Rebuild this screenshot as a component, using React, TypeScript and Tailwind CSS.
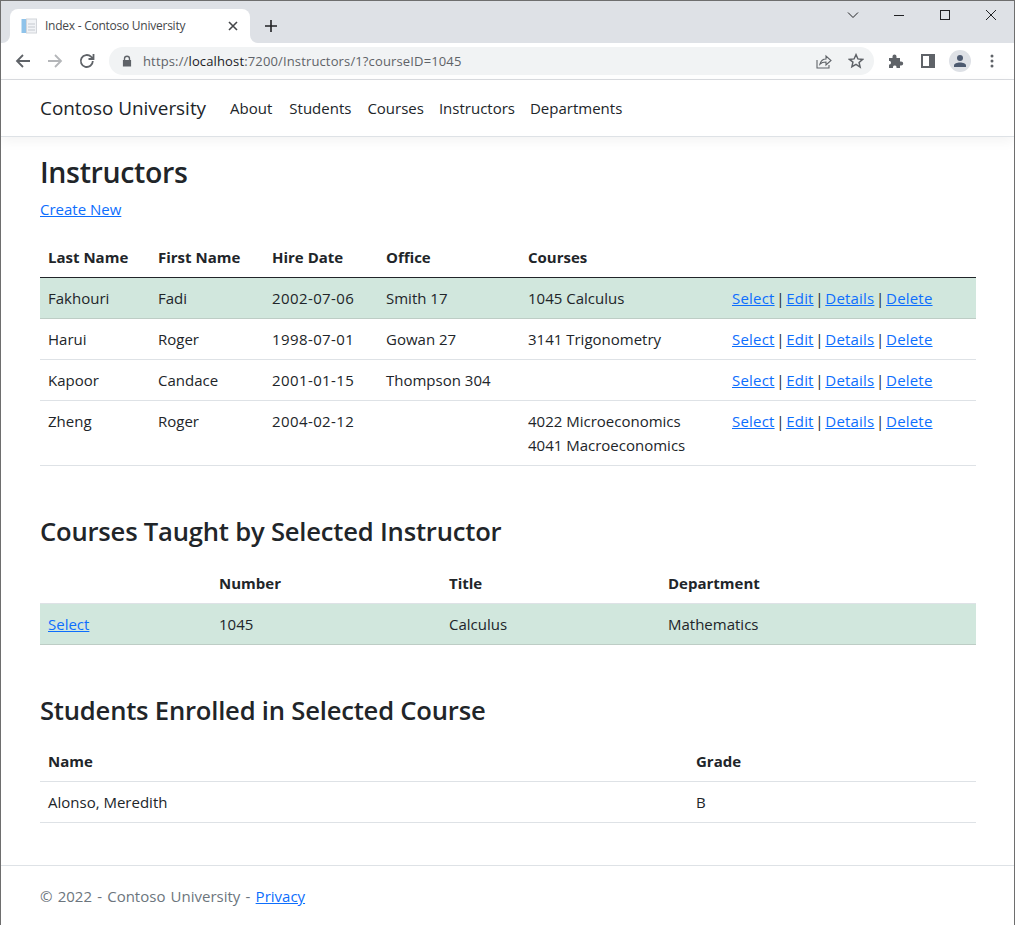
import React from "react";

const link = "text-[#0d6efd] underline";
const actionLink = "text-[#0d6efd] underline tracking-[0.2px]";
const td = "px-2 py-2 align-top border-b border-[#dee2e6]";
const tdSel = "px-2 py-2 align-top border-b border-[#bdcdc5] bg-[#d1e7dd]";
const th = "px-2 py-2 text-left font-bold align-bottom";

function Sep() {
  return <span className="mx-[1.7px]">|</span>;
}

function Actions() {
  return (
    <div className="flex whitespace-nowrap">
      <a className={actionLink}>Select</a><Sep /><a className={actionLink}>Edit</a><Sep /><a className={actionLink}>Details</a><Sep /><a className={actionLink}>Delete</a>
    </div>
  );
}

const instructors = [
  { l: "Fakhouri", f: "Fadi", h: "2002-07-06", o: "Smith 17", c: ["1045 Calculus"] },
  { l: "Harui", f: "Roger", h: "1998-07-01", o: "Gowan 27", c: ["3141 Trigonometry"] },
  { l: "Kapoor", f: "Candace", h: "2001-01-15", o: "Thompson 304", c: [] },
  { l: "Zheng", f: "Roger", h: "2004-02-12", o: "", c: ["4022 Microeconomics", "4041 Macroeconomics"] },
];

function Chrome() {
  return (
    <div>
      <div className="h-[43px] bg-[#dee1e6] border-t border-[#6e6e6e] flex items-end pl-[9px] relative">
        <div className="w-[240px] h-[34px] bg-white rounded-t-lg flex items-center pl-[11px] pr-[12px] relative">
          <svg width="8" height="8" viewBox="0 0 8 8" className="absolute -left-[8px] bottom-0"><path d="M8 0v8H0a8 8 0 0 0 8-8z" fill="#ffffff" /></svg>
          <svg width="8" height="8" viewBox="0 0 8 8" className="absolute -right-[8px] bottom-0"><path d="M0 0v8h8a8 8 0 0 1-8-8z" fill="#ffffff" /></svg>
          <svg width="16" height="16" viewBox="0 0 16 16" className="shrink-0">
            <rect x="0.5" y="1" width="5" height="14" fill="#8fc3ea" />
            <rect x="5.500" y="1" width="10" height="14" fill="#f1f3f6" stroke="#d2d5da" />
            <path d="M7 6h7M7 9h7M7 12h7" stroke="#c5c9cf" strokeWidth="1" />
          </svg>
          <span className="ml-[8px] text-[12px] text-[#45474a] flex-1 whitespace-nowrap tracking-[-0.25px]">Index - Contoso University</span>
          <svg width="10" height="10" viewBox="0 0 10 10"><path d="M1 1l8 8M9 1l-8 8" stroke="#45474a" strokeWidth="1.6" /></svg>
        </div>
        <svg width="14" height="14" viewBox="0 0 14 14" className="ml-[14px] mb-[10px]"><path d="M7 1v12M1 7h12" stroke="#202124" strokeWidth="1.6" /></svg>
        <div className="absolute right-[17px] top-[8px] flex items-center gap-[34px]">
          <svg width="12" height="12" viewBox="0 0 12 12"><path d="M1 3.500l5 5 5-5" fill="none" stroke="#202124" /></svg>
          <svg width="12" height="12" viewBox="0 0 12 12"><path d="M1 6.500h10" stroke="#202124" /></svg>
          <svg width="12" height="12" viewBox="0 0 12 12"><rect x="1.500" y="1.500" width="9" height="9" fill="none" stroke="#202124" /></svg>
          <svg width="12" height="12" viewBox="0 0 12 12"><path d="M1 1l10 10M11 1L1 11" stroke="#202124" /></svg>
        </div>
      </div>
      <div className="h-[37px] bg-white border-b border-[#dadce0] flex items-center pl-[14px]">
        <svg width="16" height="16" viewBox="0 0 16 16"><path d="M15 8H2M8 2L2 8l6 6" fill="none" stroke="#5f6368" strokeWidth="1.800" /></svg>
        <svg width="16" height="16" viewBox="0 0 16 16" className="ml-[16px]"><path d="M1 8h13M8 2l6 6-6 6" fill="none" stroke="#b4b6b9" strokeWidth="1.800" /></svg>
        <svg width="16" height="16" viewBox="0 0 16 16" className="ml-[16px]"><path d="M13.800 8a6 6 0 1 1-1.800-4.300L14.500 6M14.500 1v5h-5" fill="none" stroke="#5f6368" strokeWidth="1.800" /></svg>
        <div className="ml-[14px] w-[765px] h-[28px] rounded-full bg-[#f1f3f4] flex items-center pl-[13px]">
          <svg width="10" height="12" viewBox="0 0 11 12"><path d="M2 5V3.500a3.500 3.500 0 0 1 7 0V5h1v7H1V5zm1.500 0h4V3.500a2 2 0 0 0-4 0z" fill="#5f6368" /></svg>
          <span className="ml-[11px] text-[13px] text-[#5f6368] whitespace-nowrap tracking-[0.14px]">https://<span className="text-[#202124]">localhost</span>:7200/Instructors/1?courseID=1045</span>
          <span className="flex-1" />
          <svg width="16" height="16" viewBox="0 0 16 16" className="mr-[16px]"><path d="M1 7v8h12v-3M4 11c1-3.500 3.500-5 6-5V3l5 4.500-5 4.500V9c-2.500 0-4.500.5-6 2z" fill="none" stroke="#5f6368" strokeWidth="1.100" /></svg>
          <svg width="16" height="16" viewBox="0 0 24 24" className="mr-[10px]"><path d="M12 2.500l2.900 6.400 7 .7-5.300 4.600 1.600 6.900L12 17l-6.200 3.600 1.600-6.900L2.100 9.600l7-.7z" fill="none" stroke="#5f6368" strokeWidth="2.200" /></svg>
        </div>
        <svg width="16" height="16" viewBox="0 0 16 16" className="ml-[14px]"><path d="M1 5h3.500V3.500a2 2 0 0 1 4 0V5H12v3.500h1.200a2 2 0 0 1 0 4H12V15H8.500v-1.200a1.800 1.800 0 0 0-3.500 0V15H1v-3.500h1a2 2 0 0 0 0-3.500H1z" fill="#5f6368" /></svg>
        <svg width="14" height="14" viewBox="0 0 14 14" className="ml-[17px]"><path d="M0 0h14v14H0zM2 2v10h6V2z" fill="#5f6368" fillRule="evenodd" /></svg>
        <div className="ml-[14px] w-[22px] h-[22px] rounded-full bg-[#dee1e6] flex items-center justify-center">
          <svg width="14" height="14" viewBox="0 0 14 14"><circle cx="7" cy="4" r="3" fill="#4d5a70" /><path d="M1 13v-1.500C1 9.500 4 8.500 7 8.500s6 1 6 3V13z" fill="#4d5a70" /></svg>
        </div>
        <svg width="4" height="14" viewBox="0 0 4 14" className="ml-[19px]"><circle cx="2" cy="2" r="1.500" fill="#5f6368" /><circle cx="2" cy="7" r="1.500" fill="#5f6368" /><circle cx="2" cy="12" r="1.500" fill="#5f6368" /></svg>
      </div>
    </div>
  );
}

export default function App() {
  return (
    <div className="w-[1015px] h-[925px] overflow-hidden bg-white text-[#212529] text-[15px] leading-[24px] font-['Open_Sans','Liberation_Sans',sans-serif] border-x border-[#6e6e6e] box-border">
      <Chrome />
      <nav className="h-[57px] border-b border-[#dee2e6] shadow-[0_4px_12px_rgba(0,0,0,0.05)] flex items-center pl-[39px]">
        <a className="text-[18.9px] text-[#212529] mr-[24px]">Contoso University</a>
        <a className="mr-[17px]">About</a>
        <a className="mr-[16px]">Students</a>
        <a className="mr-[15px]">Courses</a>
        <a className="mr-[15px]">Instructors</a>
        <a>Departments</a>
      </nav>
      <main className="pl-[39px] w-[975px]">
        <h1 className="text-[28.5px] leading-[34px] font-semibold tracking-[-0.35px] mt-[18px] mb-[8px]">Instructors</h1>
        <p className="mb-[16px]"><a className={link}>Create New</a></p>
        <table className="w-[936px] table-fixed border-collapse">
          <colgroup><col className="w-[110px]" /><col className="w-[114px]" /><col className="w-[114px]" /><col className="w-[142px]" /><col className="w-[204px]" /><col /></colgroup>
          <thead>
            <tr className="border-b border-[#212529]">
              <th className={th}>Last Name</th><th className={th}>First Name</th><th className={th}>Hire Date</th><th className={th}>Office</th><th className={th}>Courses</th><th className={th}></th>
            </tr>
          </thead>
          <tbody>
            {instructors.map((r, i) => {
              const c = i === 0 ? tdSel : td;
              return (
                <tr key={r.l}>
                  <td className={c}>{r.l}</td><td className={c}>{r.f}</td><td className={c + " tracking-[0.4px]"}>{r.h}</td><td className={c}>{r.o}</td>
                  <td className={c}>{r.c.map((x) => <div key={x}>{x}</div>)}</td>
                  <td className={c}><Actions /></td>
                </tr>
              );
            })}
          </tbody>
        </table>
        <h2 className="text-[25.6px] leading-[29px] font-semibold tracking-[-0.2px] mt-[51px] mb-[8px]">Courses Taught by Selected Instructor</h2>
        <table className="w-[936px] table-fixed border-collapse mt-[17px]">
          <colgroup><col className="w-[171px]" /><col className="w-[230px]" /><col className="w-[219px]" /><col /></colgroup>
          <thead><tr className="border-b border-[#dee2e6]"><th className={th}></th><th className={th}>Number</th><th className={th}>Title</th><th className={th}>Department</th></tr></thead>
          <tbody><tr><td className={tdSel}><a className={link}>Select</a></td><td className={tdSel}>1045</td><td className={tdSel}>Calculus</td><td className={tdSel}>Mathematics</td></tr></tbody>
        </table>
        <h2 className="text-[25.6px] leading-[29px] font-semibold tracking-[-0.2px] mt-[51px] mb-[16px]">Students Enrolled in Selected Course</h2>
        <table className="w-[936px] table-fixed border-collapse">
          <colgroup><col className="w-[648px]" /><col /></colgroup>
          <thead><tr className="border-b border-[#dee2e6]"><th className={th}>Name</th><th className={th}>Grade</th></tr></thead>
          <tbody><tr><td className={td}>Alonso, Meredith</td><td className={td}>B</td></tr></tbody>
        </table>
      </main>
      <footer className="mt-[42px] border-t border-[#dee2e6] pl-[39px] pt-[18px] text-[#6c757d] [word-spacing:1.3px]">
        © 2022 - Contoso University - <a className={link}>Privacy</a>
      </footer>
    </div>
  );
}
